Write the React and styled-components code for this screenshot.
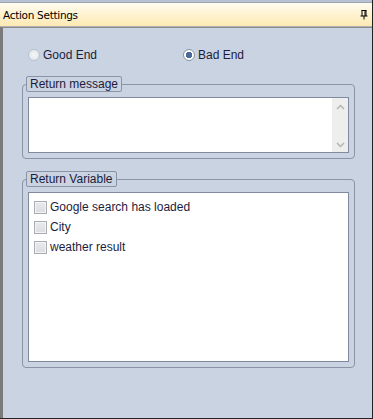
import React from "react";
import styled, { createGlobalStyle } from "styled-components";

const GlobalStyle = createGlobalStyle`
  body {
    margin: 0;
    font-family: "Liberation Sans", Arial, sans-serif;
  }
`;

const Frame = styled.div`
  width: 373px;
  height: 419px;
  box-sizing: border-box;
  display: flex;
  flex-direction: column;
  background: #c9d3e2;
  border-right: 1px solid #222;
  border-bottom: 1px solid #222;
`;

const TopStrip = styled.div`
  height: 2px;
  background: #b8c2d2;
  border-bottom: 1px solid #9aa4b4;
`;

const TitleBar = styled.div`
  height: 23px;
  display: flex;
  align-items: center;
  justify-content: space-between;
  padding: 0 4px 0 3px;
  background: linear-gradient(#fffcf0, #fde9b2);
  border-bottom: 1px solid #b0b0b0;
  font-family: "DejaVu Sans", sans-serif;
  font-size: 10.5px;
  color: #000;
  letter-spacing: -0.3px;
`;

const Panel = styled.div`
  flex: 1;
  display: flex;
  flex-direction: column;
  padding: 19px 16px 0 19px;
  border-left: 3px solid #7a7a7a;
  border-top: 1px solid #8c8c8c;
  background: #c9d3e2;
`;

const RadioRow = styled.div`
  display: flex;
  align-items: center;
  height: 16px;
  padding-left: 6px;
  margin-bottom: 13px;
`;

const RadioLabel = styled.label`
  display: flex;
  align-items: center;
  gap: 2px;
  width: ${(p) => p.$width}px;
  font-size: 12px;
  color: #1c1c3c;
`;

const RadioDot = styled.span`
  width: 12px;
  height: 12px;
  border-radius: 50%;
  box-sizing: border-box;
  border: 1px solid ${(p) => (p.$disabled ? "#b9c1cd" : "#8793a6")};
  background: ${(p) =>
    p.$checked
      ? "radial-gradient(circle, #4b6a98 0 3px, #fff 3.5px)"
      : "radial-gradient(circle, #f4f5f7, #dfe3e9)"};
  margin-right: 1px;
`;

const Group = styled.fieldset`
  margin: 0;
  padding: 5px 5px 5px 5px;
  border: 1px solid #8a94a6;
  border-radius: 4px;
  width: 333px;
  box-sizing: border-box;
  margin-bottom: ${(p) => p.$gap || 0}px;
`;

const Legend = styled.legend`
  margin-left: -2px;
  padding: 0 3px;
  height: 16px;
  line-height: 15px;
  box-sizing: border-box;
  border: 1px solid #8a94a6;
  border-radius: 2px;
  font-size: 12px;
  color: #1c1c3c;
`;

const TextBox = styled.div`
  height: 56px;
  box-sizing: border-box;
  border: 1px solid #7f8a9c;
  background: #fff;
  display: flex;
  justify-content: flex-end;
`;

const ScrollBar = styled.div`
  width: 16px;
  background: #eeeeee;
  display: flex;
  flex-direction: column;
  justify-content: space-between;
  align-items: center;
  padding: 6px 0 4px;
`;

const ListBox = styled.div`
  height: 170px;
  box-sizing: border-box;
  border: 1px solid #7f8a9c;
  background: #fff;
  padding: 4px 0 0 5px;
`;

const Item = styled.label`
  display: flex;
  align-items: center;
  gap: 3px;
  height: 20px;
  font-size: 12px;
  color: #1c1c3c;
`;

const Box = styled.span`
  width: 13px;
  height: 13px;
  box-sizing: border-box;
  border: 1px solid #a9adb3;
  background: linear-gradient(#e9eaec, #dadcdf);
  box-shadow: inset 0 0 0 1px #f3f3f3;
`;

const Chevron = ({ up }) => (
  <svg width="9" height="6" viewBox="0 0 9 6">
    <path
      d={up ? "M1 5 L4.5 1.5 L8 5" : "M1 1 L4.5 4.5 L8 1"}
      fill="none"
      stroke="#b4b4b4"
      strokeWidth="1.5"
    />
  </svg>
);

const Pin = () => (
  <svg width="8" height="10" viewBox="0 0 8 10">
    <path d="M1.5 0.5 H6.5 M2 0.5 V6 M6 0.5 V6 M0.5 6 H7.5 M4 6 V9.5" stroke="#000" fill="none" />
    <path d="M5 1 V6" stroke="#000" strokeWidth="1" />
  </svg>
);

const variables = ["Google search has loaded", "City", "weather result"];

const App = () => (
  <>
    <GlobalStyle />
    <Frame>
      <TopStrip />
      <TitleBar>
        <span>Action Settings</span>
        <Pin />
      </TitleBar>
      <Panel>
        <RadioRow>
          <RadioLabel $width={155}>
            <RadioDot $disabled />
            Good End
          </RadioLabel>
          <RadioLabel>
            <RadioDot $checked />
            Bad End
          </RadioLabel>
        </RadioRow>
        <Group $gap={12}>
          <Legend>Return message</Legend>
          <TextBox>
            <ScrollBar>
              <Chevron up />
              <Chevron />
            </ScrollBar>
          </TextBox>
        </Group>
        <Group>
          <Legend>Return Variable</Legend>
          <ListBox>
            {variables.map((v) => (
              <Item key={v}>
                <Box />
                {v}
              </Item>
            ))}
          </ListBox>
        </Group>
      </Panel>
    </Frame>
  </>
);

export default App;
